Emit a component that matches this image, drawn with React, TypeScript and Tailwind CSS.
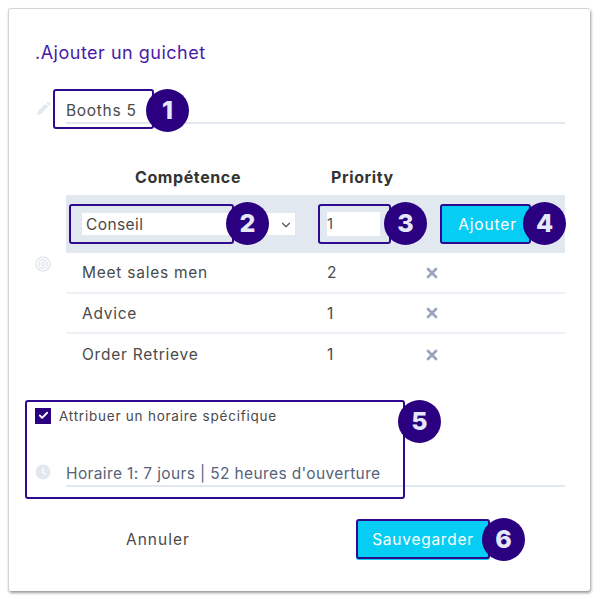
import { Check, ChevronDown, X } from 'lucide-react';

const rows = [
  { name: 'Meet sales men', priority: '2' },
  { name: 'Advice', priority: '1' },
  { name: 'Order Retrieve', priority: '1' },
];

// numbered callout that sits over the screenshot
function Badge({ n, className }: { n: number; className: string }) {
  return (
    <div className={`absolute flex h-[43px] w-[43px] items-center justify-center rounded-full bg-[#2a0080] text-[25px] font-extrabold text-[#e4e8f8] ${className}`}>
      {n}
    </div>
  );
}

function Outline({ className }: { className: string }) {
  return <div className={`absolute rounded-[3px] border-2 border-[#2f0a8f] ${className}`} />;
}

export default function App() {
  return (
    <div className="relative h-[601px] w-[600px] overflow-hidden bg-white font-['Inter',sans-serif] text-[#4a4a4a]">
      <div className="ml-[8px] mt-[8px] h-[583px] w-[582px] rounded-[3px] border-t border-l border-[#d4d4d4] bg-white pl-[26px] pr-[24px] pt-[32px] shadow-[1px_2px_3px_rgba(0,0,0,0.4)]">
        <h1 className="h-[24px] text-[18px] leading-[24px] tracking-[0.5px] text-[#4a1aa8]">.Ajouter un guichet</h1>

        <div className="mt-[26px] flex items-start">
          <svg viewBox="0 0 24 24" className="mt-[10px] h-[16px] w-[16px] shrink-0 fill-[#e2e8f0]">
            <path d="M3 21l1.2-5.6L15.6 4l4.4 4.4L8.6 19.8 3 21zM17 2.6l1.4-1.4a1.2 1.2 0 0 1 1.7 0l2.7 2.7a1.2 1.2 0 0 1 0 1.7L21.4 7 17 2.6z" />
          </svg>
          <div className="ml-[15px] h-[33px] w-[499px] border-b-2 border-[#e2e8f0] pt-[8px] text-[15.5px] leading-[24px] tracking-[0.7px]">Booths 5</div>
        </div>

        <div className="mt-[41px] flex items-start">
          <svg viewBox="0 0 16 16" className="mt-[91px] h-[16px] w-[16px] shrink-0 fill-none stroke-[#e2e8f0]">
            <circle cx="8" cy="8" r="7" strokeWidth="1.6" />
            <circle cx="8" cy="8" r="4.2" strokeWidth="1.4" />
            <circle cx="8" cy="8" r="1.6" strokeWidth="1.4" />
          </svg>
          <div className="ml-[15px] w-[499px]">
            <div className="flex h-[30px] items-start text-[16px] font-bold leading-[24px] tracking-[0.6px] text-[#333]">
              <div className="w-[265px] pl-[69px]">Compétence</div>
              <div>Priority</div>
            </div>
            <div className="flex h-[58px] items-center bg-[#e2e8f0] pl-[16px]">
              <div className="flex h-[22px] w-[213px] items-center justify-between bg-white pl-[4px] pr-[2px] pt-[1px] text-[15.5px] tracking-[0.4px]">
                Conseil
                <ChevronDown size={14} className="text-[#555]" />
              </div>
              <div className="ml-[32px] flex h-[24px] w-[53px] items-center bg-white pt-[1px] text-[15px] text-[#555]">1</div>
              <button className="ml-[61px] h-[38px] w-[89px] rounded-[3px] bg-[#06cdf4] pl-[4px] pt-[1px] text-[15.5px] tracking-[0.85px] text-white">Ajouter</button>
            </div>
            {rows.map((row, i) => (
              <div key={row.name} className={`flex h-[40.5px] items-center pt-[1px] text-[15.5px] tracking-[0.75px] ${i < 2 ? 'border-b-2 border-[#eef1f6]' : ''}`}>
                <div className="w-[261px] pl-[16px]">{row.name}</div>
                <div className="w-[97px]">{row.priority}</div>
                <X size={16} strokeWidth={4} className="text-[#9aa5bd]" />
              </div>
            ))}
          </div>
        </div>

        <div className="mt-[33px] flex items-center">
          <div className="flex h-[16px] w-[16px] items-center justify-center bg-[#2a0080]">
            <Check size={11} strokeWidth={4} className="text-white" />
          </div>
          <span className="ml-[8px] text-[13.5px] leading-[16px] tracking-[0.77px]">Attribuer un horaire spécifique</span>
        </div>

        <div className="mt-[38px] flex items-start">
          <svg viewBox="0 0 16 16" className="mt-[2px] h-[16px] w-[16px] shrink-0">
            <circle cx="8" cy="8" r="7.5" fill="#e2e8f0" />
            <path d="M8 3.5V8.5L11 10.5" fill="none" stroke="#fff" strokeWidth="1.4" />
          </svg>
          <div className="ml-[15px] h-[25px] w-[499px] border-b-2 border-[#e2e8f0] text-[15.5px] leading-[24px] tracking-[0.37px] text-[#56627a]">
            Horaire 1: 7 jours | 52 heures d'ouverture
          </div>
        </div>

        <div className="mt-[34px] flex items-center">
          <div className="w-[321px] pl-[91px] text-[15.5px] tracking-[1px]">Annuler</div>
          <button className="h-[39px] w-[134px] rounded-[3px] bg-[#06cdf4] text-[15.5px] tracking-[0.75px] text-white">Sauvegarder</button>
        </div>
      </div>

      <Outline className="left-[53px] top-[89px] h-[40px] w-[101px]" />
      <Outline className="left-[69px] top-[204px] h-[40px] w-[165px]" />
      <Outline className="left-[318px] top-[204px] h-[40px] w-[73px]" />
      <Outline className="left-[440px] top-[204px] h-[40px] w-[91px]" />
      <Outline className="left-[25px] top-[400px] h-[99px] w-[380px]" />
      <Outline className="left-[356px] top-[519px] h-[40px] w-[134px]" />

      <Badge n={1} className="left-[146px] top-[89px]" />
      <Badge n={2} className="left-[226px] top-[202px]" />
      <Badge n={3} className="left-[384px] top-[202px]" />
      <Badge n={4} className="left-[523px] top-[202px]" />
      <Badge n={5} className="left-[398px] top-[400px]" />
      <Badge n={6} className="left-[482px] top-[518px]" />
    </div>
  );
}
